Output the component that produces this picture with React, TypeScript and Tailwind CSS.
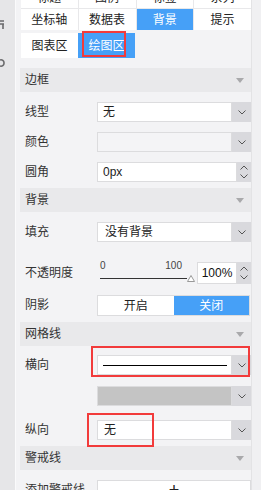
import React from "react";

const FONT = { fontFamily: '"Liberation Sans", "Noto Sans CJK SC", sans-serif' };

const Chevron = ({ up = false }: { up?: boolean }) => (
  <svg width="8" height="5" viewBox="0 0 8 5" className="block">
    <polyline
      points={up ? "0.5,4.5 4,1 7.5,4.5" : "0.5,0.5 4,4 7.5,0.5"}
      fill="none"
      stroke="#555"
      strokeWidth="1"
    />
  </svg>
);

const Spinner = () => (
  <div className="w-[14px] h-full bg-[#dadade] flex flex-col items-center justify-center gap-[4px]">
    <Chevron up />
    <Chevron />
  </div>
);

const Section = ({ title, mt }: { title: string; mt: string }) => (
  <div className={`h-[24px] bg-[#e9e9eb] flex items-center justify-between pl-[5px] pr-[7px] text-[12px] text-[#333] ${mt}`}>
    <span>{title}</span>
    <svg width="8" height="5" viewBox="0 0 8 5">
      <polygon points="0,0 8,0 4,5" fill="#a9a9ab" />
    </svg>
  </div>
);

const Row = ({ label, mt, children }: { label: string; mt: string; children: React.ReactNode }) => (
  <div className={`h-[30px] flex items-center ${mt}`}>
    <div className="w-[77px] pl-[5px] text-[12px] text-[#333]">{label}</div>
    <div className="flex-1 h-[20px] flex">{children}</div>
  </div>
);

const Select = ({ children, bg = "bg-white" }: { children?: React.ReactNode; bg?: string }) => (
  <>
    <div className={`flex-1 border border-[#dcdcde] ${bg} flex items-center pl-[5px] text-[12px] text-[#222]`}>
      {children}
    </div>
    <div className="w-[19px] bg-[#d9d9dd] flex items-center justify-center">
      <Chevron />
    </div>
  </>
);

export default function App() {
  return (
    <div className="w-[261px] h-[490px] overflow-hidden flex bg-[#f3f3f5]" style={FONT}>
      {/* left toolbar edge */}
      <div className="w-[15px] shrink-0 bg-[#e6e6e8] relative">
        <svg width="6" height="60" viewBox="0 0 6 60" className="absolute left-0 top-[18px]">
          <path d="M0 3 H4 M0 6 H4 M3 6 V11" stroke="#6a6a6c" strokeWidth="1.6" fill="none" />
          <path d="M0 42 A3 3 0 0 1 4 45 A3 3 0 0 1 0 48" stroke="#6a6a6c" strokeWidth="1.6" fill="none" />
        </svg>
      </div>

      {/* settings panel */}
      <div className="w-[236px] shrink-0 pl-[4px] border-l border-[#fafafb]">
        {/* tabs */}
        <div className="ml-[1px] mt-[-13px] grid grid-cols-4 gap-px bg-[#e8e8ea] text-[12px] text-[#222]">
          {["标题", "图例", "标签", "系列", "坐标轴", "数据表", "背景", "提示"].map((t) => (
            <div
              key={t}
              className={`h-[21px] flex items-center justify-center ${t === "背景" ? "bg-[#46a0f7] text-white" : "bg-white"}`}
            >
              {t}
            </div>
          ))}
        </div>

        <div className="ml-[1px] mt-[3px] flex text-[12px]">
          <div className="w-[57px] h-[25px] bg-white flex items-center justify-center text-[#222]">图表区</div>
          <div className="w-[57px] h-[25px] bg-[#46a0f7] flex items-center justify-center text-white relative">
            绘图区
            <div className="absolute left-[4px] top-[-2px] w-[44px] h-[26px] border-2 border-[#f23b3b]" />
          </div>
        </div>

        <Section title="边框" mt="mt-[10px]" />
        <Row label="线型" mt="mt-[5px]">
          <Select>无</Select>
        </Row>
        <Row label="颜色" mt="">
          <Select bg="bg-[#f4f4f6]" />
        </Row>
        <Row label="圆角" mt="">
          <div className="flex-1 border border-[#dcdcde] bg-white flex items-center pl-[5px] text-[12px] text-[#222]">
            0px
          </div>
          <Spinner />
        </Row>

        <Section title="背景" mt="mt-[1px]" />
        <Row label="填充" mt="mt-[5px]">
          <Select>
            <span className="pl-[2px]">没有背景</span>
          </Select>
        </Row>

        {/* opacity */}
        <div className="h-[30px] mt-[11px] flex items-center">
          <div className="w-[77px] pl-[5px] text-[12px] text-[#333]">不透明度</div>
          <div className="w-[100px] h-[26px] flex flex-col pl-[4px]">
            <div className="flex justify-between w-[82px] text-[10px] leading-[12px] text-[#444]">
              <span>0</span>
              <span>100</span>
            </div>
            <div className="flex items-end mt-[3px]">
              <div className="w-[87px] h-px bg-[#333] mb-[3px]" />
              <svg width="8" height="7" viewBox="0 0 8 7">
                <polygon points="4,0.5 7.5,6.5 0.5,6.5" fill="#fff" stroke="#999" strokeWidth="1" />
              </svg>
            </div>
          </div>
          <div className="h-[22px] flex ml-[2px]">
            <div className="w-[40px] border border-[#dcdcde] bg-white flex items-center justify-center text-[12px] text-[#111]">
              100%
            </div>
            <Spinner />
          </div>
        </div>

        <Row label="阴影" mt="mt-[2px]">
          <div className="flex-1 h-[21px] flex border border-[#dcdcde] mr-[1px] text-[12px]">
            <div className="flex-1 bg-white flex items-center justify-center text-[#222]">开启</div>
            <div className="flex-1 bg-[#46a0f7] flex items-center justify-center text-white">关闭</div>
          </div>
        </Row>

        <Section title="网格线" mt="mt-[2px]" />
        <Row label="横向" mt="mt-[4px]">
          <div className="flex-1 flex relative">
            <Select>
              <div className="w-[124px] h-px bg-black mt-[1px]" />
            </Select>
            <div className="absolute left-[-6px] top-[-9px] w-[159px] h-[31px] border-2 border-[#f23b3b]" />
          </div>
        </Row>
        <Row label="" mt="mt-[1px]">
          <Select bg="bg-[#c4c4c4]" />
        </Row>
        <Row label="纵向" mt="mt-[4px]">
          <div className="flex-1 flex relative">
            <Select>
              <span className="pl-[1px]">无</span>
            </Select>
            <div className="absolute left-[-10px] top-[-7px] w-[67px] h-[34px] border-2 border-[#f23b3b]" />
          </div>
        </Row>

        <Section title="警戒线" mt="mt-[1px]" />
        <Row label="添加警戒线" mt="mt-[5px]">
          <div className="flex-1 border border-[#dcdcde] bg-white flex items-center justify-center text-[18px] text-[#222]">
            +
          </div>
        </Row>
      </div>

      {/* scrollbar edge */}
      <div className="flex-1 bg-[#f0f0f2] border-l border-[#e3e3e5]" />
    </div>
  );
}
